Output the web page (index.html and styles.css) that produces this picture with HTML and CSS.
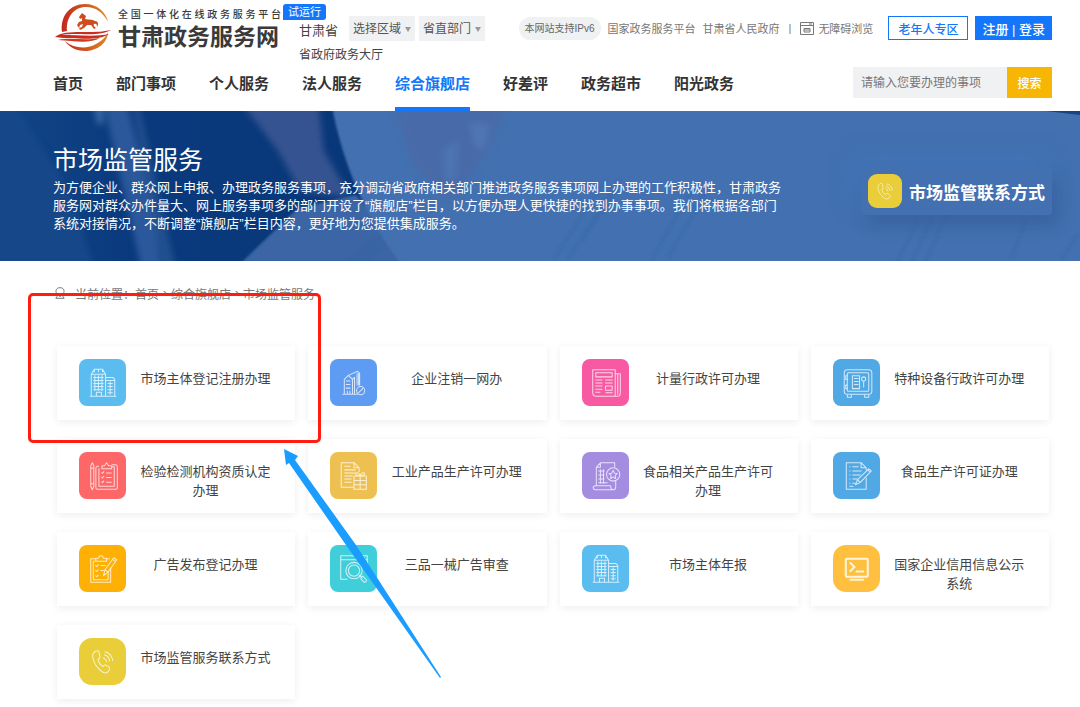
FILE: index.html
```html
<!DOCTYPE html>
<html lang="zh-CN">
<head>
<meta charset="utf-8">
<meta name="viewport" content="width=device-width, initial-scale=1">
<title>甘肃政务服务网 - 市场监管服务</title>
<link rel="stylesheet" href="styles.css">
</head>
<body>
<svg class="sprite" aria-hidden="true">
  <symbol id="i-building" viewBox="0 0 46 46">
    <path d="M10.500 36.500H36.500M12 36V15L15 10H23L26 15V36M12 15H26M26 18H33L35 20V36M26 21H35M17 36V32.500H22V36M15 10V13M19 10V13M23 10V13"/>
    <path d="M14 18H24M14 21H24M14 24H24M14 27H24M14 30H24M28 24H33M28 27H33M28 30H33M28 33H33M15.500 16V31M19 16V31M22.500 16V31M30.500 22V35"/>
  </symbol>
  <symbol id="i-cancel" viewBox="0 0 46 46">
    <path d="M12 34.500H27M14 34V20L18 16L22 20V34M18 16L27 12L29 14V26M22 20L24 18V34M15.500 21.500H20M15.500 25H20M15.500 28.500H20M17 31V34M19.500 31V34M26.500 14V26M28 14V26"/>
    <circle cx="30" cy="31" r="4"/><path d="M27.500 33.500L32.500 28.500"/>
  </symbol>
  <symbol id="i-news" viewBox="0 0 46 46">
    <path d="M10.500 10.500H32.500V36.500H14Q10.500 36.500 10.500 33ZM32.500 14.500H37.500V33.500Q37.500 36.500 34.500 36.500H31M35 15V35M13.500 13.500H29.500V17.500H13.500Z"/>
    <path d="M13 20.500H20M22.500 20.500H30M13 23.500H20M22.500 23.500H30M13 26.500H20M13 29.500H20M13 32.500H18M23 26.500H29.500V30.500H23ZM23 33H30"/>
  </symbol>
  <symbol id="i-safe" viewBox="0 0 46 46">
    <rect x="11" y="10.500" width="27" height="24" rx="3"/><rect x="14" y="13.500" width="21" height="18" rx="1"/>
    <path d="M19 16.500H26V29H19ZM20.500 19H25M20.500 22H25M20.500 25H25M14 16.500H12.500V20H14M14 25.500H12.500V29H14M14 35V37.500H18V35M31 35V37.500H35V35M30 22V28"/><circle cx="30" cy="19.500" r="2"/>
  </symbol>
  <symbol id="i-clipboard" viewBox="0 0 46 46">
    <path d="M19.500 14H18Q16.500 14 16.500 16V35Q16.500 36.500 18 36.500H36Q37.500 36.500 37.500 35V14Q37.500 12.500 35.500 12.500H32M19.500 16V33.500H34.500V14.500H31.500M22.500 16.500V13.500H25L27 10.500L29 13.500H32V16.500Z"/>
    <path d="M11.500 13.500L13 10.500L14.500 13.500V33.500L13 37L11.500 33.500ZM11.500 16H14.500M11.500 31H14.500M22 20L23 21L24.500 19M26.500 20.500H32M22 24.500L23 25.500L24.500 23.500M26.500 25H32M22 29L23 30L24.500 28M26.500 29.500H32"/>
  </symbol>
  <symbol id="i-product" viewBox="0 0 46 46">
    <path d="M23.500 34.500H11V10.500H23.500L28.500 15.500V19.500M23.500 10.500V15.500H28.500M14 14H20M14 17.500H25M14 20.500H25M14 23.500H22M14 26.500H21M14 29.500H21"/>
    <path d="M23.500 23.500H35.500V36.500H23.500ZM23.500 28H35.500M23.500 32H35.500M29.500 23.500V36.500M29.500 23Q24 23 25.500 20.500Q28 19.500 29.500 23Q31 19.500 33.500 20.500Q35 23 29.500 23"/>
  </symbol>
  <symbol id="i-license" viewBox="0 0 46 46">
    <path d="M14 33V15L18 10.500H32V15M14 15H18V10.500M13 33H28Q28 37 31 37H14Q11 37 11 35Q11 33 13 33M33 28V34Q33 37 31 37M16 18.500H22M16 22.500H22M16 26.500H22M16 30H25M18 17V31M21 17V31"/>
    <circle cx="30.500" cy="22" r="6.500"/><path d="M30.500 18L31.800 20.700L34.500 21L32.500 23L33 26L30.500 24.600L28 26L28.500 23L26.500 21L29.200 20.700Z"/>
  </symbol>
  <symbol id="i-write" viewBox="0 0 46 46">
    <path d="M32.500 25V36.500H13V10.500H27.500L32.500 15.500V18M27.500 10.500V15.500H32.500M16 14.500H17M19 14.500H25M16 18.500H17M19 18.500H28M16 22.500H17M19 22.500H27M16 26.500H17M19 26.500H24M16 30.500H17M19 30.500H22M16 33.500H20"/>
    <path d="M22 32L24 27L35 16.500L37.500 18.500L26.500 30ZM24 27L26.500 30M34 17.500L36.500 20"/>
  </symbol>
  <symbol id="i-publish" viewBox="0 0 46 46">
    <path d="M31 22V36.500H11.500V13.500H16.500M26 13.500H30M14 16V34H28.500V26M14 16H16M16.500 16V13H19Q19.500 10.500 21.500 10.500Q23.500 10.500 24 13H27V16ZM16 20L17.500 21L19 19M21 20H26M16 25L17.500 26L19 24M21 25H25M16 30L17.500 31L19 29"/>
    <path d="M24 30L25.500 24L34 12.500L37 14.500L28.500 26.500ZM25.500 24L28.500 26.500M33 14L36 16.500"/>
  </symbol>
  <symbol id="i-inspect" viewBox="0 0 46 46">
    <path d="M17 33.500H10.500V10.500H36.500V28M10.500 14.500H36.500M30 12.500H31M33 12.500H34M28.500 29.500L31 32M30 33L33.500 36.500Q36 36.500 35.500 34L32 30.500Z"/>
    <circle cx="23.500" cy="25" r="8"/><circle cx="23.500" cy="25" r="5.500"/>
  </symbol>
  <symbol id="i-terminal" viewBox="0 0 46 46">
    <g class="bold-lines"><rect x="12.500" y="13.500" width="21.500" height="17.500" rx="1"/><path d="M17 17.500L21 21.500L17 25.500M23 26H29.500M17 34H29.500"/></g>
  </symbol>
  <symbol id="i-phone" viewBox="0 0 46 46">
    <path d="M17.500 12.500Q12.500 14 13.500 19.500Q15.500 28.500 23.500 33.500Q28 35.500 30 30.500Q30.500 29 29 28L26 26.500Q24.500 26 23.500 28Q19.500 25.500 18.500 21Q21 20 20.500 18.500L19.500 13.500Q19 12 17.500 12.500Z"/>
    <path d="M23.500 19.500Q26.500 20 27 23.500M24.500 16.500Q29.500 17.500 30 23M25 13.500Q32 14.500 33 22.500"/>
  </symbol>
</svg>

<header class="header">
  <div class="topbar">
    <a class="brand" href="#">
      <svg class="brand-mark" viewBox="0 0 58 50" aria-hidden="true">
        <defs><linearGradient id="ring" x1="0" y1="0" x2="1" y2="0"><stop offset="0" stop-color="#c3271f"/><stop offset="1" stop-color="#dc8a22"/></linearGradient></defs>
        <path d="M8 29C6 13 16 1 31 1C43 1 52 9 54 19C49 9 41 4 32 4C20 4 12 14 13 28Z" fill="url(#ring)"/>
        <path d="M11 38C20 46 34 46 42 41C48 38 52 34 54 29C54 40 43 48 31 48C22 48 15 44 11 38Z" fill="url(#ring)"/>
        <path d="M1 34C8 28 24 29 36 29C46 29 52 28 57 27C50 31 38 32 27 31C18 31 11 31 8 32C22 32 44 34 55 31C46 37 30 36 19 35C12 35 6 35 1 34Z" fill="#c92c20"/>
        <path d="M4 37C18 34 30 38 46 35C36 41 20 38 4 37Z" fill="#cf3a20"/>
        <path d="M25 14L28 10L32 13L31 16C35 17 38 16 41 18C44 18 45 21 43 24C43 21 42 20 40 21C39 22 40 24 42 25L40 26L37 22L33 22L30 25L26 27L25 25L28 24L29 21L26 22L25 25L23 22L25 19L28 18L28 15L26 16Z" fill="#cf4b20"/>
      </svg>
      <span class="brand-text"><span class="brand-sub">全国一体化在线政务服务平台</span><strong class="brand-name">甘肃政务服务网</strong></span>
    </a>
    <div class="place">
      <span class="trial">试运行</span>
      <div class="place-row">
        <span class="province">甘肃省</span>
        <span class="pick"><select aria-label="选择区域"><option>选择区域</option></select></span>
        <span class="pick"><select aria-label="省直部门"><option>省直部门</option></select></span>
      </div>
      <a class="hall" href="#">省政府政务大厅</a>
    </div>
    <div class="tools">
      <span class="ipv6">本网站支持IPv6</span>
      <a href="#">国家政务服务平台</a>
      <a href="#">甘肃省人民政府</a>
      <span class="bar">|</span>
      <a class="access" href="#"><svg viewBox="0 0 14 13" aria-hidden="true"><path d="M.5 .5H13.500V12.500H.5ZM.5 3.500H13.500M9 2H12M4 6.500H10V10H4ZM4 8H10"/></svg>无障碍浏览</a>
      <button class="elder" type="button">老年人专区</button>
      <button class="login" type="button">注册 | 登录</button>
    </div>
  </div>
  <div class="menubar">
    <nav class="nav">
      <a href="#">首页</a><a href="#">部门事项</a><a href="#">个人服务</a><a href="#">法人服务</a><a class="active" href="#" aria-current="page">综合旗舰店</a><a href="#">好差评</a><a href="#">政务超市</a><a href="#">阳光政务</a>
    </nav>
    <form class="search">
      <input type="text" placeholder="请输入您要办理的事项" aria-label="请输入您要办理的事项">
      <button type="button">搜索</button>
    </form>
  </div>
</header>

<section class="banner">
  <svg class="banner-art" viewBox="0 0 1080 150" preserveAspectRatio="none" aria-hidden="true">
    <defs>
      <linearGradient id="deep" x1="0" x2="1"><stop offset="0" stop-color="#124587"/><stop offset=".12" stop-color="#0a3a7d"/><stop offset=".35" stop-color="#083779"/></linearGradient>
      <filter id="soft"><feGaussianBlur stdDeviation="3"/></filter>
      <filter id="edge"><feGaussianBlur stdDeviation="1"/></filter>
    </defs>
    <rect width="1080" height="150" fill="url(#deep)"/>
    <g filter="url(#soft)">
      <path d="M-10 -10H12L70 80L95 160H-10Z" fill="#144789"/>
      <path d="M103 -10H126L152 90L162 160H142Z" fill="#2a599b"/>
      <path d="M132 -10H138L176 160H164Z" fill="#24508f"/>
      <path d="M93 -10H103V14L97 12Z" fill="#3d69a8"/>
      <path d="M240 -10H318L324 40L350 86L300 80L278 40Z" fill="#365390"/>
    </g>
    <g filter="url(#edge)">
      <path d="M242 151L298 97L356 84L410 151Z" fill="#3b65a4"/>
      <path d="M332 -5C340 40 360 100 402 155H1090V-5Z" fill="#4270b0"/>
    </g>
    <g filter="url(#soft)">
      <path d="M394 -8H508L488 40L455 86H440L412 50Z" fill="#4a6ba8"/>
      <path d="M443 40L458 30L456 66L446 72Z" fill="#4d75b2"/>
      <path d="M470 12L490 14L484 40L474 34Z" fill="#5076b2"/>
    </g>
    <g class="marks" filter="url(#edge)">
      <path d="M350 150L382 124M364 150L386 132M554 148L606 68M568 148L620 68M582 130L620 72M652 148L692 78M668 146L706 82M898 150L918 108M912 150L932 108M926 150L950 96M1012 146L1026 108M1062 148L1078 122"/>
    </g>
    <path d="M1046 0H1080V4Z" fill="#17457f"/>
  </svg>
  <div class="banner-body">
    <div class="intro">
      <h1>市场监管服务</h1>
      <p>为方便企业、群众网上申报、办理政务服务事项，充分调动省政府相关部门推进政务服务事项网上办理的工作积极性，甘肃政务服务网对群众办件量大、网上服务事项多的部门开设了“旗舰店”栏目，以方便办理人更快捷的找到办事事项。我们将根据各部门系统对接情况，不断调整“旗舰店”栏目内容，更好地为您提供集成服务。</p>
    </div>
    <a class="contact" href="#"><svg class="icon contact-icon yellow" aria-hidden="true"><use href="#i-phone"/></svg>市场监管联系方式</a>
  </div>
</section>

<main class="main">
  <nav class="crumbs" aria-label="当前位置">
    <svg viewBox="0 0 10 12" aria-hidden="true"><path d="M3 8C1 6 .8 4.500 1 3.500C1.500 1.500 3 .7 5 .7C7 .7 8.500 1.500 9 3.500C9.200 4.500 9 6 7 8L5 9.500ZM3 8L.8 11.300H9.200L7 8"/></svg>
    <span>当前位置：</span><a href="#">首页</a><span class="sep">›</span><a href="#">综合旗舰店</a><span class="sep">›</span><a href="#">市场监管服务</a>
  </nav>
  <div class="cards">
    <a class="card" href="#"><svg class="icon sky" aria-hidden="true"><use href="#i-building"/></svg><span>市场主体登记注册办理</span></a>
    <a class="card" href="#"><svg class="icon blue" aria-hidden="true"><use href="#i-cancel"/></svg><span>企业注销一网办</span></a>
    <a class="card" href="#"><svg class="icon pink" aria-hidden="true"><use href="#i-news"/></svg><span>计量行政许可办理</span></a>
    <a class="card" href="#"><svg class="icon azure" aria-hidden="true"><use href="#i-safe"/></svg><span>特种设备行政许可办理</span></a>
    <a class="card" href="#"><svg class="icon red" aria-hidden="true"><use href="#i-clipboard"/></svg><span>检验检测机构资质认定办理</span></a>
    <a class="card" href="#"><svg class="icon sand" aria-hidden="true"><use href="#i-product"/></svg><span>工业产品生产许可办理</span></a>
    <a class="card" href="#"><svg class="icon violet" aria-hidden="true"><use href="#i-license"/></svg><span>食品相关产品生产许可办理</span></a>
    <a class="card" href="#"><svg class="icon azure" aria-hidden="true"><use href="#i-write"/></svg><span>食品生产许可证办理</span></a>
    <a class="card" href="#"><svg class="icon orange" aria-hidden="true"><use href="#i-publish"/></svg><span>广告发布登记办理</span></a>
    <a class="card" href="#"><svg class="icon teal" aria-hidden="true"><use href="#i-inspect"/></svg><span>三品一械广告审查</span></a>
    <a class="card" href="#"><svg class="icon sky" aria-hidden="true"><use href="#i-building"/></svg><span>市场主体年报</span></a>
    <a class="card" href="#"><svg class="icon amber round" aria-hidden="true"><use href="#i-terminal"/></svg><span>国家企业信用信息公示系统</span></a>
    <a class="card" href="#"><svg class="icon yellow round" aria-hidden="true"><use href="#i-phone"/></svg><span>市场监管服务联系方式</span></a>
  </div>
  <div class="highlight"></div>
  <svg class="pointer" viewBox="0 0 160 230" aria-hidden="true"><path d="M1 0L15 7L12 11L73 96L158 228L157 229L63 96L6 14L3 16Z"/></svg>
</main>
</body>
</html>
```
FILE: styles.css
```css
* { box-sizing: border-box; }

body {
  margin: 0;
  background: #fff;
  color: #444;
  font-family: "Liberation Sans", "Noto Sans CJK SC", sans-serif;
  font-size: 13px;
}

a { color: inherit; text-decoration: none; }
button, input, select { font: inherit; border: 0; margin: 0; }
.sprite { position: absolute; width: 0; height: 0; }

/* Header */
.header { height: 111px; display: flex; flex-direction: column; justify-content: space-between; }
.topbar { display: flex; align-items: flex-start; padding: 3px 28px 0 54px; }
.brand { display: flex; align-items: flex-start; gap: 6px; }
.brand-mark { width: 58px; height: 50px; }
.brand-text { width: 163px; display: flex; flex-direction: column; padding-top: 5px; color: #3a3a3a; }
.brand-sub { font-size: 10px; line-height: 13px; font-weight: 500; text-align: justify; text-align-last: justify; white-space: nowrap; }
.brand-name { font-size: 23px; line-height: 32px; white-space: nowrap; }

.place { position: relative; display: flex; flex-direction: column; padding: 13px 0 0 18px; }
.trial {
  position: absolute; left: 2px; top: 1px;
  width: 43px; height: 16px;
  border-radius: 3px 3px 3px 0;
  background: #1477fb; color: #fff;
  font-size: 11px; line-height: 16px; text-align: center;
}
.place-row { display: flex; align-items: center; gap: 4px; }
.province { font-size: 13px; margin-right: 7px; padding-top: 2px; }
.pick { position: relative; }
.pick select {
  appearance: none;
  width: 66px; height: 25px; padding: 0 4px;
  border-radius: 0; background: #f0f1f3; color: #555; font-size: 12px;
}
.pick::after {
  content: ""; position: absolute; right: 4px; top: 11px;
  border: 3px solid transparent; border-top: 5px solid #999; border-bottom: 0;
  pointer-events: none;
}
.hall { font-size: 12px; line-height: 18px; padding-top: 5px; }

.tools { flex: 1; display: flex; align-items: center; justify-content: flex-end; gap: 7px; padding-top: 13px; color: #777; font-size: 11px; white-space: nowrap; }
.ipv6 { padding: 0 6px; border-radius: 12px; background: #f0f1f3; font-size: 10px; line-height: 23px; color: #666; }
.bar { padding: 0 2px; }
.access { display: flex; align-items: center; gap: 4px; margin-right: 8px; }
.access svg { width: 14px; height: 13px; fill: none; stroke: #777; }
.elder { height: 24px; padding: 0 9px; border: 1px solid #1477fb; background: #fff; color: #1477fb; font-size: 12px; font-weight: 500; }
.login { height: 24px; padding: 0 7px; background: #1477fb; color: #fff; font-size: 13px; font-weight: 500; }

.menubar { display: flex; justify-content: space-between; align-items: flex-start; padding: 0 28px 0 53px; }
.nav { display: flex; gap: 33px; }
.nav a { height: 44px; padding-top: 6px; font-size: 15px; line-height: 22px; font-weight: 700; color: #333; white-space: nowrap; }
.nav .active { color: #1477fb; border-bottom: 4px solid #1477fb; }
.search { display: flex; height: 31px; }
.search input { width: 154px; padding: 0 8px; border-radius: 0; background: #f0f1f3; font-size: 12px; }
.search input::placeholder { color: #777; opacity: 1; }
.search button { width: 45px; padding: 0; background: #f8b604; color: #fff; font-size: 12px; font-weight: 500; }

/* Banner */
.banner { position: relative; background: #4270b0; color: #fff; }
.banner-art { position: absolute; width: 100%; height: 100%; }
.marks { fill: none; stroke: #2b61a5; stroke-width: 4; stroke-dasharray: 3 2; opacity: .25; }
.banner-body { position: relative; display: flex; justify-content: space-between; align-items: flex-start; min-height: 150px; padding: 32px 28px 20px 53px; }
.intro { width: 748px; }
.intro h1 { margin: 0; font-size: 25px; line-height: 34px; font-weight: 400; }
.intro p { margin: 2px 0 0; max-width: 732px; font-size: 13px; line-height: 18px; }
.contact {
  display: flex; align-items: center; gap: 7px;
  margin-top: 24px; height: 48px; padding: 0 7px;
  border-radius: 3px; background: #4270b0;
  box-shadow: 6px 10px 16px rgba(40, 70, 125, .3), -6px -10px 24px rgba(70, 125, 200, .35);
  font-size: 17px; font-weight: 700; white-space: nowrap;
}

/* Icons */
.icon { flex: none; width: 47px; height: 47px; border-radius: 8px; fill: none; stroke: rgba(255, 255, 255, .75); stroke-width: 1; stroke-linejoin: round; }
.round { border-radius: 13px; }
.bold-lines { stroke: #fff5df; stroke-width: 2; stroke-linecap: round; }
.contact-icon { width: 34px; height: 34px; border-radius: 9px; }
.sky { background: #5bbcf0; }
.blue { background: #5e9bf2; }
.pink { background: #f759a3; }
.azure { background: #50a8e5; }
.red { background: #fd6768; }
.sand { background: #eec052; }
.violet { background: #a48ce0; }
.orange { background: #ffb004; }
.teal { background: #40cedb; }
.amber { background: #ffbf3f; }
.yellow { background: #e9cd39; }

/* Content */
.main { position: relative; padding: 23px 31px 9px 55px; }
.crumbs { display: flex; align-items: center; height: 18px; font-size: 12px; color: #777; white-space: nowrap; }
.crumbs svg { width: 10px; height: 12px; margin-right: 10px; fill: none; stroke: #777; }
.sep { width: 12px; text-align: center; }
.cards { display: grid; grid-template-columns: repeat(4, 1fr); gap: 19px 13px; padding: 44px 0 0 2px; }
.card {
  display: flex; align-items: flex-start; gap: 12px;
  min-height: 74px; padding: 13px 22px 10px;
  background: #fff; box-shadow: 0 2px 8px rgba(0, 0, 0, .07);
}
.card span { flex: 1; padding-top: 10px; line-height: 19px; text-align: center; }

/* Annotations over the content */
.highlight { position: absolute; left: 28px; top: 32px; width: 293px; height: 150px; border: 3px solid #ff1d0f; border-radius: 5px; }
.pointer { position: absolute; left: 283px; top: 188px; width: 160px; height: 230px; fill: #1a9dff; pointer-events: none; }
```
